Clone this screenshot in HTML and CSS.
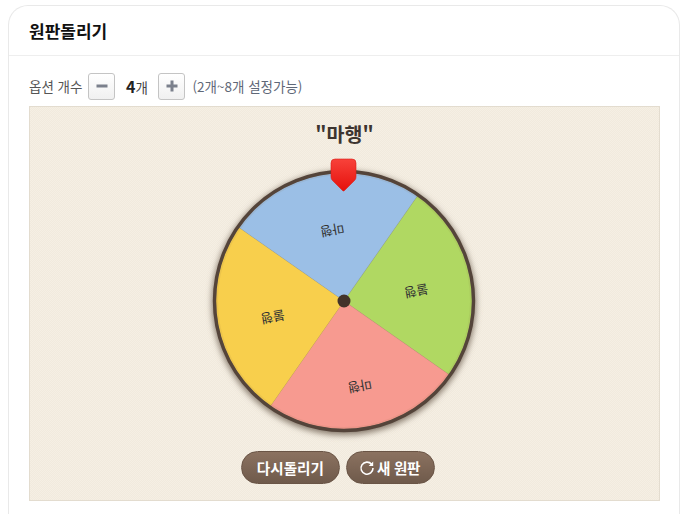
FILE: index.html
```html
<!DOCTYPE html>
<html lang="ko">
<head>
    <meta charset="UTF-8">
    <meta name="viewport" content="width=device-width, initial-scale=1.0">
    <title>원판돌리기</title>
    <link rel="stylesheet" href="styles.css">
</head>
<body>
    <div class="card">
        <h2 class="card-title">원판돌리기</h2>
        <div class="card-body">
            <div class="options">
                <span class="options-label">옵션 개수</span>
                <button class="step-btn" type="button">
                    <svg width="12" height="12" viewBox="0 0 12 12"><rect x="0.5" y="4.5" width="11" height="3" fill="#7b808c"/></svg>
                </button>
                <span class="count"><b>4</b>개</span>
                <button class="step-btn" type="button">
                    <svg width="12" height="12" viewBox="0 0 12 12"><path d="M4.5 0.5h3v4h4v3h-4v4h-3v-4h-4v-3h4z" fill="#7b808c"/></svg>
                </button>
                <span class="hint">(2개~8개 설정가능)</span>
            </div>
            <div class="stage">
                <div class="result">"마행"</div>
                <svg class="wheel" width="290" height="280" viewBox="0 0 290 280">
                    <defs>
                        <filter id="wheelShadow" x="-10%" y="-10%" width="120%" height="120%">
                            <feGaussianBlur stdDeviation="3"/>
                        </filter>
                        <linearGradient id="pinGrad" x1="0" y1="0" x2="0" y2="1">
                            <stop offset="0" stop-color="#f8423a"/>
                            <stop offset="1" stop-color="#e5100c"/>
                        </linearGradient>
                    </defs>
                    <circle cx="145" cy="149" r="132" fill="#85786a" filter="url(#wheelShadow)"/>
                    <!-- slices: center 145,147 r 128, rotated 35deg -->
                    <path d="M145 147L218.4 42.1A128 128 0 0 1 249.9 220.4Z" fill="#b0d862"/>
                    <path d="M145 147L249.9 220.4A128 128 0 0 1 71.6 251.9Z" fill="#f79a90"/>
                    <path d="M145 147L71.6 251.9A128 128 0 0 1 40.1 73.6Z" fill="#f8cf4c"/>
                    <path d="M145 147L40.1 73.6A128 128 0 0 1 218.4 42.1Z" fill="#9bbfe6"/>
                    <g stroke-width="0.6" stroke-opacity="0.35" fill="none">
                        <path d="M145 147L218.4 42.1" stroke="#8a9a50"/>
                        <path d="M145 147L249.9 220.4" stroke="#b08a70"/>
                        <path d="M145 147L71.6 251.9" stroke="#c09a50"/>
                        <path d="M145 147L40.1 73.6" stroke="#a09a70"/>
                    </g>
                    <circle cx="145" cy="147" r="127" fill="none" stroke="#8a6a40" stroke-opacity="0.1" stroke-width="2"/>
                    <circle cx="145" cy="147" r="129.500" fill="none" stroke="#54443a" stroke-width="3.4"/>
                    <text class="slice-label" transform="translate(132.500 71) rotate(170)">마행</text>
                    <text class="slice-label" transform="translate(216.500 132) rotate(170)">불행</text>
                    <text class="slice-label" transform="translate(160 227) rotate(170)">마행</text>
                    <text class="slice-label" transform="translate(73 158) rotate(170)">불행</text>
                    <circle cx="145" cy="147" r="6.5" fill="#43332a"/>
                    <path d="M132 9Q132 5 136 5H153Q157 5 157 9V23Q157 25 155.500 26.500L145.500 36.500Q144.500 37.500 143.500 36.500L133.500 26.500Q132 25 132 23Z" fill="url(#pinGrad)" stroke="#d8201a" stroke-width="0.6"/>
                </svg>
                <div class="actions">
                    <button class="wheel-btn" type="button">다시돌리기</button>
                    <button class="wheel-btn wheel-btn-new" type="button">
                        <svg width="16" height="16" viewBox="0 0 16 16"><path d="M12.600 4.300A6 6 0 1 0 14 8" fill="none" stroke="#fff" stroke-width="1.600"/><path d="M14.200 1.500V6H9.700Z" fill="#fff"/></svg>
                        새 원판
                    </button>
                </div>
            </div>
        </div>
    </div>
</body>
</html>
```

FILE: styles.css
```css
body {
    margin: 0;
    background: #fff;
    font-family: "Noto Sans CJK KR", "Noto Sans", sans-serif;
    overflow: hidden;
    height: 515px;
}

.card {
    margin: 5px 1px 0 8px;
    border: 1px solid #e9e9e9;
    border-bottom: none;
    border-radius: 20px 20px 0 0;
    height: 509px;
    box-sizing: border-box;
}

.card-title {
    margin: 0;
    height: 49px;
    line-height: 49px;
    padding-left: 20px;
    font-size: 17px;
    font-weight: 700;
    color: #111;
    border-bottom: 1px solid #eee;
}

.card-body {
    padding: 17px 19px 0 20px;
}

.options {
    display: flex;
    align-items: center;
    height: 26px;
    margin-bottom: 7px;
    font-size: 13.5px;
    color: #555;
}

.options-label {
    margin-right: 6px;
}

.step-btn {
    display: flex;
    align-items: center;
    justify-content: center;
    width: 27px;
    height: 27px;
    padding: 0;
    border: 1px solid #c4c4c4;
    border-radius: 3px;
    background: linear-gradient(#fff, #f0f0f0);
}

.count {
    width: 43px;
    text-align: center;
    color: #444;
}

.count b {
    font-size: 16px;
    color: #222;
}

.hint {
    margin-left: 7px;
    font-size: 13.5px;
    color: #5f6878;
}

.stage {
    height: 395px;
    box-sizing: border-box;
    border: 1px solid #e3dccf;
    background: repeating-conic-gradient(#f5efe4 0 25%, #f1eadd 0 50%) 0 0 / 2px 2px;
    text-align: center;
}

.result {
    height: 47px;
    line-height: 54px;
    font-size: 19.5px;
    font-weight: 700;
    color: #3d3530;
}

.wheel {
    display: block;
    margin: 0 auto;
    position: relative;
    left: -1px;
    overflow: visible;
}

.slice-label {
    font-size: 13px;
    fill: #333;
    text-anchor: middle;
}

.actions {
    display: flex;
    justify-content: center;
    gap: 6px;
    margin-top: 17px;
    padding-right: 13px;
}

.wheel-btn {
    display: flex;
    align-items: center;
    gap: 2px;
    height: 33px;
    padding: 0 15px;
    border: 1px solid #6a5546;
    border-radius: 17px;
    background: linear-gradient(#8b7260, #6f5a4b);
    color: #fff;
    font-family: inherit;
    font-size: 14.6px;
    font-weight: 700;
    white-space: nowrap;
}

.wheel-btn-new {
    padding: 0 14px;
    letter-spacing: -0.3px;
}

.wheel-btn svg {
    margin-left: -2px;
}
```
